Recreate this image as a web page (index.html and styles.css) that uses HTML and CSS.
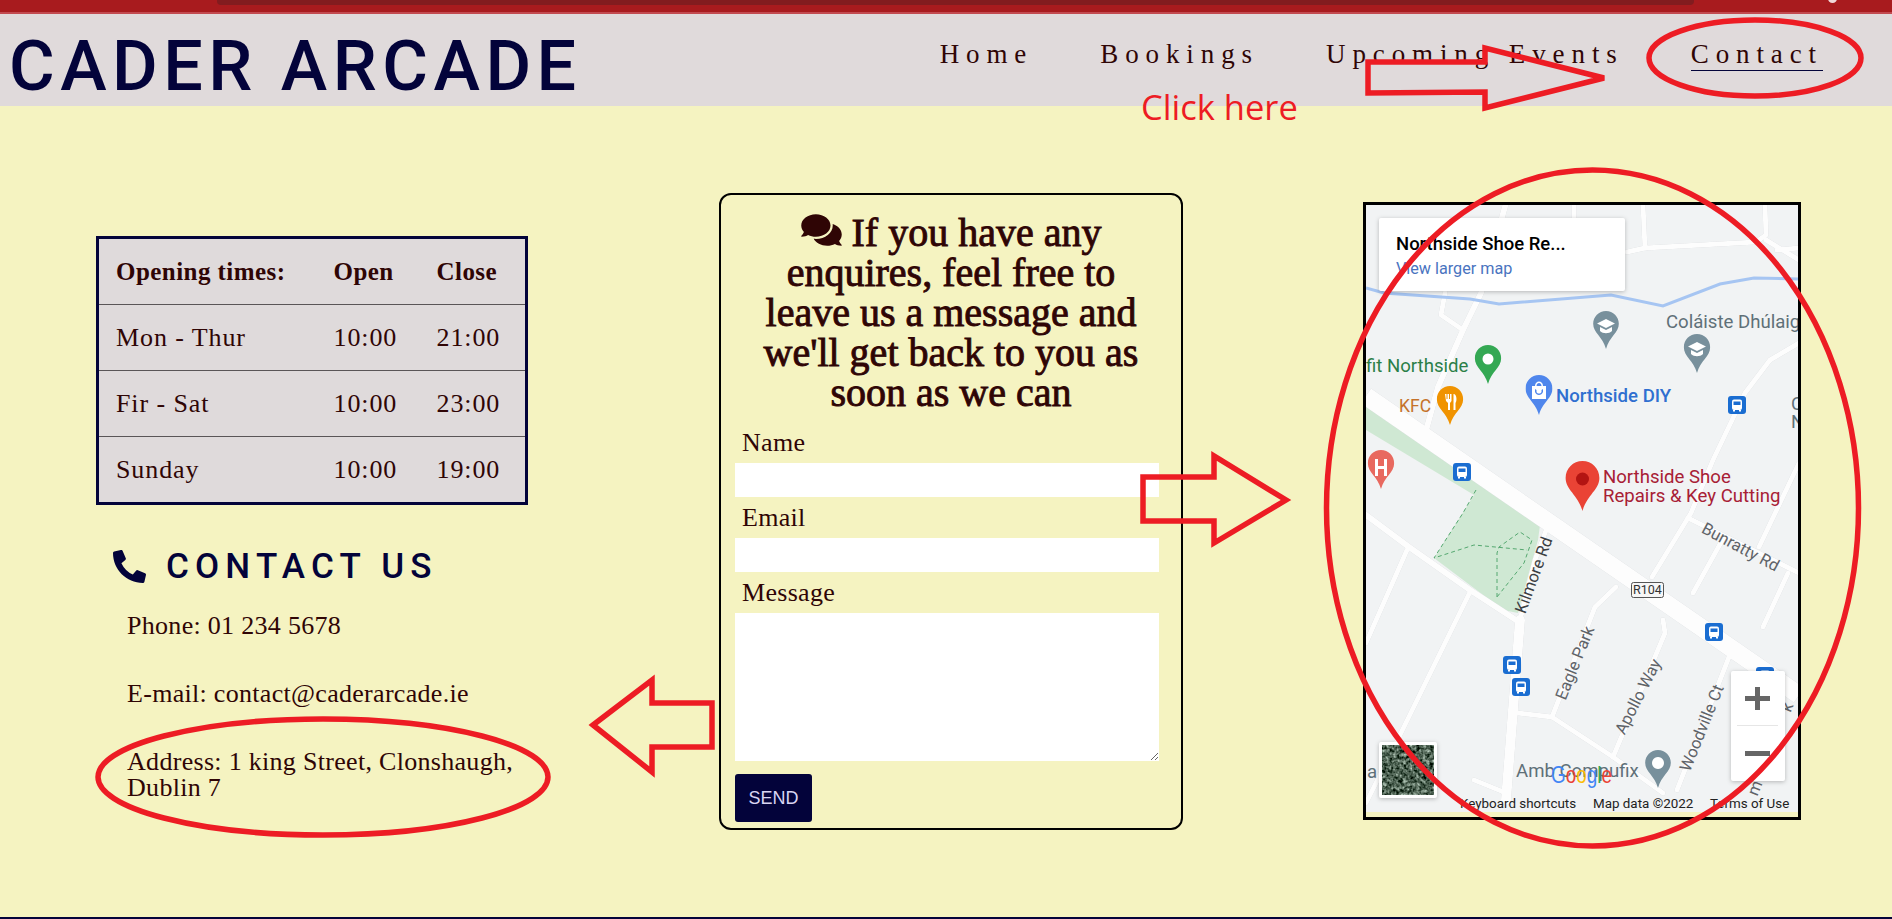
FILE: index.html
```html
<!DOCTYPE html>
<html lang="en">
<head>
<meta charset="utf-8">
<title>Cader Arcade</title>
<link rel="stylesheet" href="styles.css">
</head>
<body>
<div class="topbar"><div class="topstrip"></div><div class="topdot"></div></div>
<header class="site-header">
  <h1 class="logo">CADER ARCADE</h1>
  <nav class="nav">
    <a class="nav-link">Home</a>
    <a class="nav-link">Bookings</a>
    <a class="nav-link">Upcoming Events</a>
    <a class="nav-link nav-active">Contact</a>
  </nav>
</header>
<main class="content">
  <section class="info">
    <table class="hours">
      <tr class="row-a"><th class="c1">Opening times:</th><th class="c2">Open</th><th>Close</th></tr>
      <tr class="row-b"><td>Mon - Thur</td><td>10:00</td><td>21:00</td></tr>
      <tr class="row-b"><td>Fir - Sat</td><td>10:00</td><td>23:00</td></tr>
      <tr class="row-a"><td>Sunday</td><td>10:00</td><td>19:00</td></tr>
    </table>
    <h2 class="contact-title">
      <svg class="phone-icon" viewBox="0 0 512 512"><path d="M497.39 361.8l-112-48a24 24 0 0 0-28 6.9l-49.6 60.6A370.66 370.66 0 0 1 130.6 204.11l60.6-49.6a23.94 23.94 0 0 0 6.9-28l-48-112A24.16 24.16 0 0 0 122.6.61l-104 24A24 24 0 0 0 0 48c0 256.5 207.9 464 464 464a24 24 0 0 0 23.4-18.6l24-104a24.29 24.29 0 0 0-14.01-27.6z"/></svg>
      CONTACT US
    </h2>
    <div class="contact-lines">
      <p>Phone: 01 234 5678</p>
      <p>E-mail: contact@caderarcade.ie</p>
      <p>Address: 1 king Street, Clonshaugh, Dublin 7</p>
    </div>
  </section>

  <form class="enquiry">
    <h2 class="enquiry-title"><svg class="chat-icon" viewBox="0 0 576 512"><path d="M416 192c0-88.4-93.1-160-208-160S0 103.6 0 192c0 34.3 14.1 65.9 38 92-13.4 30.2-35.5 54.2-35.8 54.5-2.2 2.3-2.8 5.7-1.5 8.7S4.8 352 8 352c36.6 0 66.9-12.3 88.7-25 32.2 15.7 70.3 25 111.3 25 114.9 0 208-71.6 208-160zm122 220c23.9-26 38-57.7 38-92 0-66.9-53.5-124.2-129.3-148.1.9 6.6 1.3 13.3 1.3 20.1 0 105.9-107.7 192-240 192-10.8 0-21.3-.8-31.7-1.9C207.8 439.6 281.8 480 368 480c41 0 79.1-9.2 111.3-25 21.8 12.7 52.1 25 88.7 25 3.2 0 6.1-1.9 7.3-4.8 1.3-2.9.7-6.3-1.5-8.5-.3-.3-22.4-24.2-35.8-54.5z"/></svg> If you have any enquires, feel free to leave us a message and we'll get back to you as soon as we can</h2>
    <label class="field-label">Name</label>
    <input class="field" type="text">
    <label class="field-label">Email</label>
    <input class="field" type="text">
    <label class="field-label">Message</label>
    <textarea class="field field-area"></textarea>
    <button class="send" type="button">SEND</button>
  </form>

  <div class="map">
    <svg class="map-svg" viewBox="1366 205 432 612">
      <defs>
        <symbol id="pin" viewBox="0 0 27 40"><path d="M13.5 0C21 0 27 6 27 13.5 27 23 17 27 13.5 40 10 27 0 23 0 13.5 0 6 6 0 13.5 0Z"/></symbol>
        <symbol id="bus" viewBox="0 0 18 18">
          <rect width="18" height="18" rx="3" fill="#1a6dd1"/>
          <rect x="4" y="3.5" width="10" height="10.5" rx="2" fill="#fff"/>
          <rect x="5.5" y="5.5" width="7" height="3.5" fill="#1a6dd1"/>
          <rect x="5" y="14" width="2" height="1.5" fill="#fff"/>
          <rect x="11" y="14" width="2" height="1.5" fill="#fff"/>
        </symbol>
        <filter id="mottle" x="0" y="0" width="100%" height="100%" color-interpolation-filters="sRGB">
          <feTurbulence type="fractalNoise" baseFrequency="0.3" numOctaves="2" seed="4"/>
          <feColorMatrix type="matrix" values="0 0 0 1.3 -0.35  0 0 0 1.3 -0.27  0 0 0 1.3 -0.33  0 0 0 0 1"/>
        </filter>
      </defs>
      <rect class="m-bg" x="1366" y="205" width="432" height="612"/>
      <polygon class="m-park" points="1366,400 1540,525 1538,540 1518,613 1503,610 1434,558 1474,495 1366,430"/>
      <g class="m-road">
        <polyline points="1445,293 1441,315 1463,330"/>
        <polyline points="1574,203 1574,218"/>
        <polyline points="1643,205 1645,248 1756,242 1766,235 1765,205"/>
        <polyline points="1627,252 1645,248"/>
        <polyline points="1766,240 1799,260"/>
        <polyline points="1777,250 1799,248"/>
        <polyline points="1799,343 1770,360 1745,393 1713,460 1691,513 1652,577"/>
        <polyline points="1407,550 1366,643"/>
        <polyline points="1470,592 1399,737 1366,803"/>
        <polyline points="1616,587 1595,607 1552,717"/>
        <polyline points="1518,713 1552,717 1613,757 1663,793"/>
        <polyline points="1663,620 1665,633 1613,757"/>
        <polyline points="1729,657 1677,790"/>
        <polyline points="1688,518 1799,573"/>
        <polyline points="1724,537 1693,593"/>
        <polyline points="1799,463 1759,547"/>
        <polyline points="1788,573 1763,627"/>
        <polyline points="1474,780 1506,793"/>
        <polyline points="1520,620 1535,560 1548,525"/>
        <polyline class="m-road-mid" points="1506,203 1481,293 1463,330 1438,387 1427,427"/>
        <polyline class="m-road-mid" points="1366,515 1409,547 1470,590 1516,620"/>
        <polyline class="m-road-wide" points="1520,620 1506,800"/>
        <polyline class="m-main" points="1366,396 1799,695"/>
      </g>
      <polyline class="m-river" points="1366,288 1384,293 1470,299 1499,304 1611,295 1663,306 1720,284 1754,278 1799,279"/>
      <polyline class="m-dash" points="1476,490 1463,513 1434,558 1474,545 1527,550"/>
      <polyline class="m-dash" points="1497,597 1497,553 1499,547 1520,532 1532,540 1524,563 1497,597"/>

      <use href="#bus" x="1728" y="396" width="18" height="18"/>
      <use href="#bus" x="1453" y="463" width="18" height="18"/>
      <use href="#bus" x="1705" y="623" width="18" height="18"/>
      <use href="#bus" x="1503" y="656" width="18" height="18"/>
      <use href="#bus" x="1512" y="678" width="18" height="18"/>
      <use href="#bus" x="1756" y="667" width="18" height="18"/>

      <use class="p-grey" href="#pin" x="1592.5" y="311" width="27" height="38"/>
      <use class="p-grey" href="#pin" x="1683.5" y="334" width="27" height="39"/>
      <use class="p-green" href="#pin" x="1474.5" y="345" width="27" height="39"/>
      <use class="p-blue" href="#pin" x="1525.5" y="375" width="27" height="40"/>
      <use class="p-orange" href="#pin" x="1436.5" y="386" width="27" height="39"/>
      <use class="p-pink" href="#pin" x="1367.5" y="450" width="27" height="39"/>
      <use class="p-grey" href="#pin" x="1644.5" y="750" width="27" height="38"/>
      <use class="p-red" href="#pin" x="1565" y="461" width="35" height="50"/>
      <circle class="p-core" cx="1582.5" cy="479" r="6.5"/>

      <circle class="p-white" cx="1488" cy="359" r="5.5"/>
      <path class="p-white" d="M1606 319l9 4.5-9 4.5-9-4.5zM1600 327v4c3 3 9 3 12 0v-4l-6 3zM1697 342l9 4.5-9 4.5-9-4.5zM1691 350v4c3 3 9 3 12 0v-4l-6 3zM1658 757a6 6 0 1 0 .01 0z"/>
      <path class="p-white" d="M1532 386h14v13h-14zM1535 386c0-6 8-6 8 0h-1.500c0-4-5-4-5 0z"/>
      <path class="p-white" d="M1445 394h1.500v5h1v-5h1.500v5h1v-5h1.500v7l-1.500 2v7h-2v-7l-2-2zM1454 394c3 1 3 7 1.500 9v7h-2v-16z"/>
      <path class="p-white" d="M1375 459h3v7h6v-7h3v17h-3v-7h-6v7h-3z"/>
      <path class="p-grey-fill" d="M1535 389l1.500 1v2c1 2 4 2 5 0v-2l1.500-1v3c-1.500 4-6.500 4-8 0z"/>

      <text class="t t-grey" x="1666" y="328">Coláiste Dhúlaig</text>
      <text class="t t-grey" x="1791" y="410">C</text>
      <text class="t t-grey" x="1791" y="428">N</text>
      <text class="t t-green" x="1366" y="372">fit Northside</text>
      <text class="t t-orange" x="1399" y="412">KFC</text>
      <text class="t t-blue" x="1556" y="402">Northside DIY</text>
      <text class="t t-red" x="1603" y="483">Northside Shoe</text>
      <text class="t t-red" x="1603" y="502">Repairs &amp; Key Cutting</text>
      <text class="t t-grey" x="1516" y="777">Amb Compufix</text>
      <text class="t t-grey" x="1367" y="778">a</text>
      <text class="t-road" text-anchor="middle" transform="translate(1738 552) rotate(28)">Bunratty Rd</text>
      <text class="t-road t-dark" text-anchor="middle" transform="translate(1539 577) rotate(-70)">Kilmore Rd</text>
      <text class="t-road" text-anchor="middle" transform="translate(1580 665) rotate(-68)">Eagle Park</text>
      <text class="t-road" text-anchor="middle" transform="translate(1643 699) rotate(-63)">Apollo Way</text>
      <text class="t-road" text-anchor="middle" transform="translate(1707 730) rotate(-68)">Woodville Ct</text>
      <text class="t-road" text-anchor="middle" transform="translate(1792 709) rotate(-68)">k</text>
      <text class="t-road" text-anchor="middle" transform="translate(1760 790) rotate(-68)">m</text>

      <rect class="m-shield" x="1631.500" y="582.500" width="32" height="15" rx="2"/>
      <text class="t-shield" x="1647.500" y="594" text-anchor="middle">R104</text>

      <g class="m-card-shadow"><rect class="m-white" x="1379" y="218" width="246" height="73" rx="2"/></g>
      <text class="t-card" x="1396" y="250">Northside Shoe Re...</text>
      <text class="t-link" x="1396" y="274">View larger map</text>

      <text class="t-google" x="1551" y="783" textLength="61" lengthAdjust="spacingAndGlyphs"><tspan class="g-b">G</tspan><tspan class="g-r">o</tspan><tspan class="g-y">o</tspan><tspan class="g-b">g</tspan><tspan class="g-g">l</tspan><tspan class="g-r">e</tspan></text>
      <text class="t-small" x="1460" y="808">Keyboard shortcuts</text>
      <text class="t-small" x="1593" y="808">Map data ©2022</text>
      <text class="t-small" x="1710" y="808">Terms of Use</text>

      <g class="m-card-shadow"><rect class="m-white" x="1731" y="671" width="54" height="110" rx="2"/></g>
      <rect class="m-divider" x="1737" y="725" width="41" height="1"/>
      <path class="m-ctl" d="M1755 687h5v9h10v5h-10v9h-5v-9h-10v-5h10zM1745 751h25v5h-25z"/>

      <g class="m-card-shadow"><rect class="m-white" x="1379" y="742" width="58" height="56" rx="2"/></g>
      <rect class="sat-a" x="1382" y="745" width="52" height="50" filter="url(#mottle)"/>

      <rect class="m-cream" x="1366" y="812" width="432" height="5"/>
    </svg>
  </div>
</main>

<svg class="annotations" viewBox="0 0 1892 919">
  <polygon class="a-line" points="1368,62 1485,62 1485,48 1604,78 1485,108 1485,92 1368,93"/>
  <polygon class="a-line" points="1143,477 1214,477 1214,456 1286,500 1214,543 1214,521 1143,521"/>
  <polygon class="a-line" points="593,725 652,680 652,703 712,703 712,747 652,747 652,772"/>
  <ellipse class="a-line" cx="1755" cy="58" rx="106" ry="38"/>
  <ellipse class="a-line" cx="1592.500" cy="508" rx="266" ry="338"/>
  <ellipse class="a-line" cx="323" cy="777" rx="225" ry="58"/>
  <text class="a-text" x="1141" y="120">Click here</text>
</svg>
</body>
</html>
```
FILE: styles.css
```css
* { box-sizing: border-box; }
html, body { margin: 0; padding: 0; }
body {
  position: relative;
  width: 1892px;
  height: 919px;
  overflow: hidden;
  background: #f5f3c1;
  color: #2f0505;
  font-family: "Liberation Serif", serif;
}

.topbar {
  position: relative;
  height: 14px;
  background: #a81b1e;
  border-bottom: 2px solid #c24a50;
}
.topstrip {
  width: 1477px;
  height: 5px;
  margin-left: 217px;
  background: #821c1f;
  border-radius: 0 0 4px 4px;
}
.topdot {
  position: absolute;
  top: -6px;
  left: 1828px;
  width: 9px;
  height: 9px;
  border-radius: 50%;
  background: #f0d8d8;
}

.site-header {
  display: flex;
  align-items: center;
  justify-content: space-between;
  height: 92px;
  padding: 0 69px 0 9px;
  background: #e0dadb;
}
.logo {
  margin: 12px 0 0;
  font-family: Roboto, sans-serif;
  font-size: 70px;
  font-weight: 500;
  letter-spacing: 5.5px;
  line-height: 80px;
  color: #03033a;
}
.nav { display: flex; gap: 67px; align-items: center; margin-top: -10px; }
.nav-link {
  font-size: 27px;
  letter-spacing: 6.9px;
  line-height: 30px;
  padding-bottom: 1px;
  border-bottom: 1px solid transparent;
}
.nav-active { border-bottom-color: #03033a; }

.content {
  display: grid;
  grid-template-columns: 623px 464px 438px;
  column-gap: 0;
  align-items: start;
  height: 813px;
  padding: 87px 0 0 96px;
  border-bottom: 2px solid #03033a;
}

.info { padding-top: 43px; }
.hours {
  width: 432px;
  border-collapse: collapse;
  border: 3px solid #03033a;
  background: #dfdadb;
  font-size: 26px;
  letter-spacing: 0.9px;
  text-align: left;
  table-layout: fixed;
}
.hours th, .hours td { padding: 0 0 0 17px; font-weight: 400; }
.hours th { font-weight: 700; font-size: 25px; letter-spacing: 0.45px; }
.hours tr { border-bottom: 1px solid #5a5557; }
.hours tr:last-child { border-bottom: 0; }
.row-a { height: 67px; }
.row-b { height: 66px; }
.c1 { width: 219px; }
.c2 { width: 103px; }

.contact-title {
  display: flex;
  align-items: center;
  gap: 20px;
  margin: 45px 0 0 17px;
  font-family: Roboto, sans-serif;
  font-size: 35px;
  font-weight: 500;
  line-height: 32px;
  letter-spacing: 6.2px;
  color: #03033a;
}
.phone-icon { width: 33px; height: 33px; fill: #03033a; }

.contact-lines {
  width: 430px;
  margin: 30px 0 0 31px;
  font-size: 26px;
  letter-spacing: 0.3px;
  line-height: 26px;
}
.contact-lines p { margin: 0 0 42px; }

.enquiry {
  height: 637px;
  padding: 0 22px 0 14px;
  border: 2px solid #000;
  border-radius: 12px;
}
.enquiry-title {
  margin: 0 -8px 0 0;
  padding: 17px 12px 9px;
  font-size: 40px;
  font-weight: 400;
  -webkit-text-stroke: 0.9px #2f0505;
  line-height: 40px;
  text-align: center;
}
.chat-icon { width: 41px; height: 36px; fill: #2f0505; vertical-align: -2px; }
.field-label {
  display: block;
  height: 41px;
  padding-left: 7px;
  font-size: 26px;
  line-height: 41px;
  letter-spacing: 0.3px;
}
.field {
  display: block;
  width: 424px;
  height: 34px;
  padding: 2px;
  border: 0;
  border-radius: 0;
  background: #fff;
  outline: 0;
}
.field-area { height: 148px; }
.send {
  display: block;
  width: 77px;
  height: 48px;
  margin-top: 13px;
  padding: 0;
  border: 0;
  border-radius: 3px;
  background: #03033a;
  color: #d9d5f2;
  font-family: "Liberation Sans", sans-serif;
  font-size: 18px;
}

.map {
  width: 438px;
  height: 618px;
  margin: 9px 0 0 180px;
  border: 3px solid #000;
  background: #f5f3c1;
}
.map-svg { display: block; width: 432px; height: 612px; }
.m-bg { fill: #f1f3f4; }
.m-park { fill: #cfe8d3; }
.m-road { filter: drop-shadow(0 0 0.7px #c9ccd0); }
.m-road polyline { fill: none; stroke: #fdfdfd; stroke-width: 5; stroke-linejoin: round; stroke-linecap: round; }
.m-road polyline.m-road-mid { stroke-width: 6; }
.m-road polyline.m-road-wide { stroke-width: 10; }
.m-road polyline.m-main { stroke-width: 18; stroke-linecap: butt; }
.m-river { fill: none; stroke: #a6c5f2; stroke-width: 3; }
.m-dash { fill: none; stroke: #55a870; stroke-width: 1; stroke-dasharray: 4 3; }
.m-white { fill: #fff; }
.m-card-shadow { filter: drop-shadow(0 1px 2px rgba(0,0,0,.25)); }
.m-divider { fill: #e6e6e6; }
.m-ctl { fill: #666; }
.m-shield { fill: #f6f6f6; stroke: #555; stroke-width: 1; }
.m-cream { fill: #f5f3c1; }
.p-grey { fill: #78909c; }
.p-grey-fill { fill: #4f86ec; }
.p-green { fill: #34a853; }
.p-blue { fill: #4f86ec; }
.p-orange { fill: #f09300; }
.p-pink { fill: #e8695f; }
.p-red { fill: #ea4335; }
.p-core { fill: #b31412; }
.p-white { fill: #fff; }
.sat-a { fill: #4d6457; }
.t { font-family: Roboto, sans-serif; font-size: 18.6px; }
.t-grey { fill: #5f7078; }
.t-green { fill: #2b7f48; }
.t-orange { fill: #c5722a; font-size: 17.5px; }
.t-blue { fill: #2f6fd0; font-weight: 500; }
.t-red { fill: #a82035; }
.t-road { font-family: Roboto, sans-serif; font-size: 16.5px; fill: #5f6368; }
.t-dark { fill: #3c4043; }
.t-shield { font-family: Roboto, sans-serif; font-size: 12.5px; fill: #333; }
.t-card { font-family: Roboto, sans-serif; font-size: 18.5px; font-weight: 500; fill: #000; }
.t-link { font-family: Roboto, sans-serif; font-size: 16.2px; fill: #4a74c0; }
.t-small { font-family: Roboto, sans-serif; font-size: 13.4px; fill: #222; }
.t-google { font-family: "Liberation Sans", sans-serif; font-size: 24px; }
.g-b { fill: #4285f4; }
.g-r { fill: #ea4335; }
.g-y { fill: #fbbc05; }
.g-g { fill: #34a853; }

.annotations {
  position: absolute;
  top: 0;
  left: 0;
  width: 1892px;
  height: 919px;
  pointer-events: none;
}
.a-line { fill: none; stroke: #ed1c24; stroke-width: 5.5; }
.a-text { font-family: "Open Sans", sans-serif; font-size: 34.5px; fill: #ed1c24; }
```
